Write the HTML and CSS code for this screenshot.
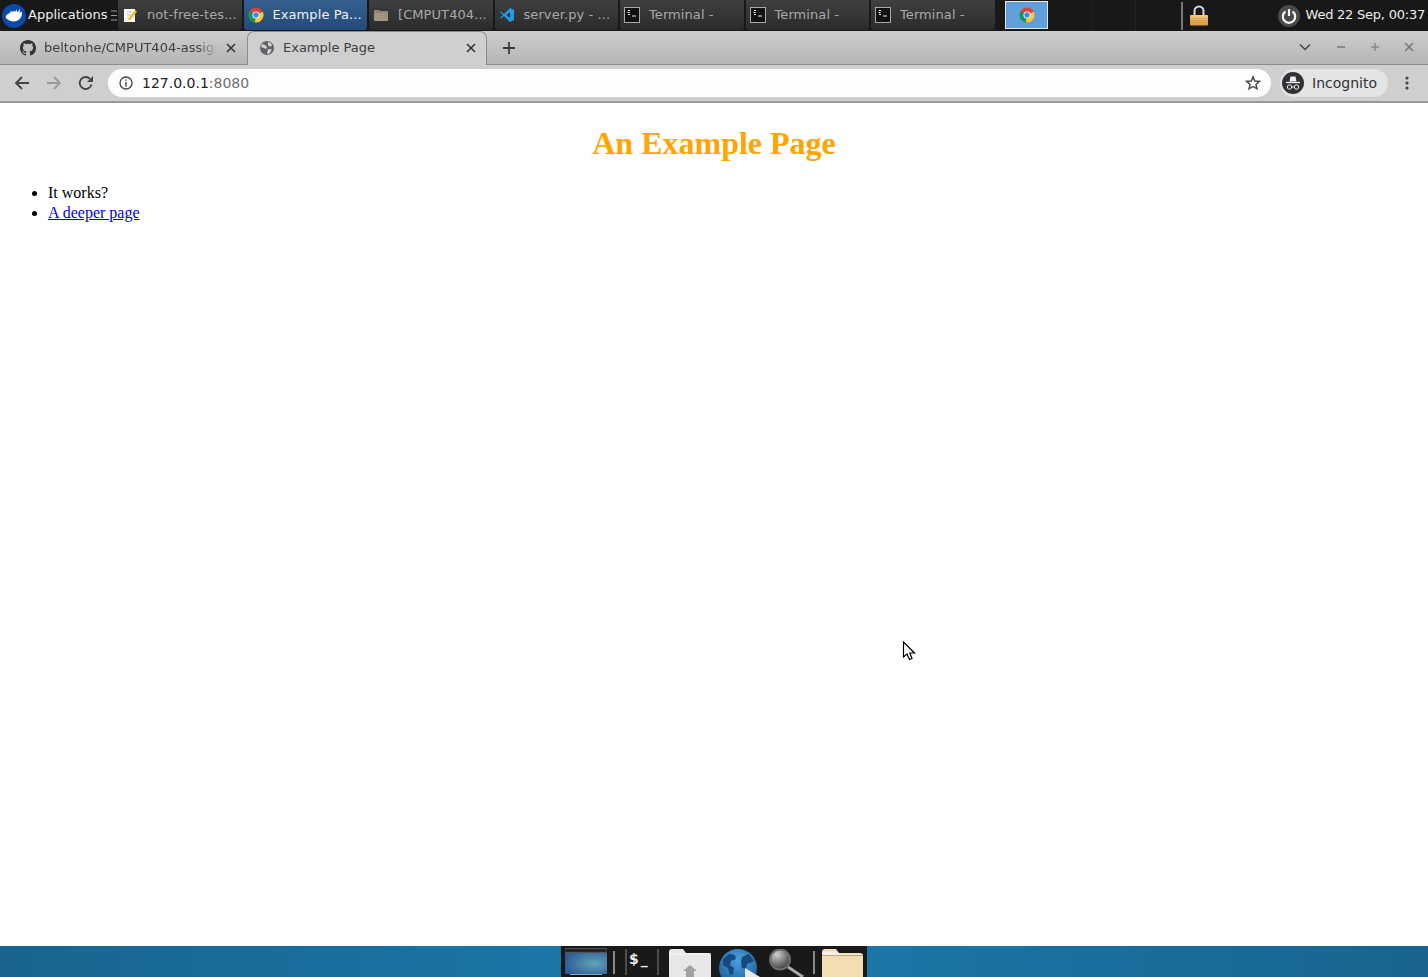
FILE: index.html
```html
<!DOCTYPE html>
<html lang="en">
<head>
<meta charset="utf-8">
<title>Example Page</title>
<link rel="stylesheet" href="styles.css">
</head>
<body>
<div class="screen">
  <header class="panel">
    <div class="apps">
      <svg class="xfce" width="24" height="24" viewBox="0 0 24 24"><circle cx="12" cy="12" r="12" fill="#0b4aa8"/><path d="M3.500 13.500C4 11 6 9.500 8 9l1-2.500 1.300 1.800 2-1.800.6 1.500 2-2.500.3 3 3-3.500-.7 3.800 2.500-1c.5 4-2 9-6.500 9.500-3.500.4-7.500-.5-10-3.800z" fill="#fff"/></svg>
      <span class="apps-label">Applications</span>
      <svg class="apps-more" width="6" height="11" viewBox="0 0 6 11"><path d="M0 1h6M0 5.500h6M0 10h6" stroke="#9a9a9a"/></svg>
    </div>
    <div class="tasks">
      <div class="task">
        <svg class="task-icon" width="16" height="16" viewBox="0 0 16 16"><rect x="2" y="2" width="11" height="13" fill="#fbfbf3"/><path d="M5 5h5M5 8h4M5 11h2" stroke="#bbb"/><path d="M7 11l6-8 2 1.500-6 8-3 1z" fill="#f2c01f"/></svg>
        <span class="task-label">not-free-tes...</span>
      </div>
      <div class="task active">
        <svg class="task-icon" width="16" height="16" viewBox="0 0 16 16"><use href="#chrome"/></svg>
        <span class="task-label">Example Pa...</span>
      </div>
      <div class="task">
        <svg class="task-icon" width="16" height="16" viewBox="0 0 16 16"><path d="M1 3h5l1 1h8v10H1z" fill="#8f8270"/><path d="M1 6h14v8H1z" fill="#a2957f"/></svg>
        <span class="task-label">[CMPUT404...</span>
      </div>
      <div class="task">
        <svg class="task-icon" width="16" height="16" viewBox="0 0 16 16"><path d="M11 1l4 2v10l-4 2-6-6-3 2.500L1 11l3-3-3-3 1-.5L5 7z" fill="#1f9be8"/><path d="M11 5L7.500 8l3.500 3z" fill="#2d2d2d"/></svg>
        <span class="task-label">server.py - ...</span>
      </div>
      <div class="task">
        <svg class="task-icon" width="16" height="16" viewBox="0 0 16 16"><use href="#term"/></svg>
        <span class="task-label">Terminal -</span>
      </div>
      <div class="task">
        <svg class="task-icon" width="16" height="16" viewBox="0 0 16 16"><use href="#term"/></svg>
        <span class="task-label">Terminal -</span>
      </div>
      <div class="task">
        <svg class="task-icon" width="16" height="16" viewBox="0 0 16 16"><use href="#term"/></svg>
        <span class="task-label">Terminal -</span>
      </div>
    </div>
    <div class="pager">
      <div class="pager-cell current"><svg width="16" height="16" viewBox="0 0 16 16"><use href="#chrome"/></svg></div>
      <div class="pager-cell"></div>
      <div class="pager-cell"></div>
      <div class="pager-cell narrow"></div>
    </div>
    <div class="lock-sep"></div>
    <svg class="lock" width="18" height="21" viewBox="0 0 18 21"><defs><linearGradient id="brass" x1="0" y1="0" x2="0" y2="1"><stop offset="0" stop-color="#f3cc85"/><stop offset="1" stop-color="#d89a3e"/></linearGradient></defs><path d="M4.500 11V6a4.500 4.500 0 0 1 9 0v5" fill="none" stroke="#d8d8d8" stroke-width="2"/><rect y="10" width="18" height="10.500" rx="1" fill="url(#brass)"/><path d="M0 13.500h18M0 15.500h18M0 17.500h18" stroke="#c98f3c" stroke-width=".5"/></svg>
    <div class="clock-group">
      <svg class="power" width="22" height="22" viewBox="0 0 22 22"><circle cx="11" cy="11" r="11" fill="#4a4a4a"/><path d="M7.500 6.500a6.200 6.200 0 1 0 7 0" fill="none" stroke="#f4f4f4" stroke-width="2.200"/><path d="M11 4v7" stroke="#f4f4f4" stroke-width="2.200"/></svg>
      <span class="clock">Wed 22 Sep, 00:37</span>
    </div>
  </header>

  <div class="tabstrip">
    <div class="tab">
      <svg class="tab-icon" width="16" height="16" viewBox="0 0 16 16"><path fill="#333" d="M8 0C3.580 0 0 3.580 0 8c0 3.540 2.290 6.530 5.470 7.590.4.070.55-.17.55-.38 0-.19-.01-.82-.01-1.490-2.010.37-2.530-.49-2.690-.94-.09-.23-.48-.94-.82-1.130-.28-.15-.68-.52-.01-.53.630-.01 1.080.58 1.230.82.720 1.210 1.870.87 2.330.66.070-.52.280-.87.510-1.070-1.780-.2-3.640-.89-3.640-3.950 0-.87.310-1.590.82-2.150-.08-.2-.36-1.020.08-2.120 0 0 .67-.21 2.200.82.640-.18 1.320-.27 2-.27s1.360.09 2 .27c1.530-1.040 2.200-.82 2.200-.82.440 1.100.16 1.920.08 2.120.51.560.82 1.270.82 2.150 0 3.070-1.870 3.750-3.650 3.950.29.250.54.730.54 1.480 0 1.070-.01 1.930-.01 2.200 0 .21.150.46.550.38A8.010 8.010 0 0 0 16 8c0-4.420-3.580-8-8-8z"/></svg>
      <span class="tab-title fade">beltonhe/CMPUT404-assignment</span>
      <svg class="tab-close" width="10" height="10" viewBox="0 0 10 10"><path d="M1 1l8 8M9 1l-8 8" stroke="#333" stroke-width="1.600"/></svg>
    </div>
    <div class="tab current">
      <svg class="tab-icon" width="16" height="16" viewBox="0 0 16 16"><circle cx="8" cy="8" r="7" fill="#5f6368"/><path d="M3 4l3 1 2 2-1 2-2-1-3-1zM9 2l3 1 1 3-3 .5-1-2zM9 9l4 .5-2.500 4L8 14z" fill="#d3d3d3"/></svg>
      <span class="tab-title">Example Page</span>
      <svg class="tab-close" width="10" height="10" viewBox="0 0 10 10"><path d="M1 1l8 8M9 1l-8 8" stroke="#333" stroke-width="1.600"/></svg>
    </div>
    <svg class="newtab" width="14" height="14" viewBox="0 0 14 14"><path d="M7 1v12M1 7h12" stroke="#3c3c3c" stroke-width="1.800"/></svg>
    <div class="win-controls">
      <svg width="12" height="8" viewBox="0 0 12 8"><path d="M1 1.500l5 5 5-5" fill="none" stroke="#444" stroke-width="1.500"/></svg>
      <span class="win-min"></span>
      <svg class="win-max" width="10" height="10" viewBox="0 0 10 10"><path d="M5 1v8M1 5h8" stroke="#8a8a8a" stroke-width="1.500"/></svg>
      <svg class="win-close" width="10" height="10" viewBox="0 0 10 10"><path d="M1 1l8 8M9 1l-8 8" stroke="#777" stroke-width="1.500"/></svg>
    </div>
  </div>

  <div class="toolbar">
    <svg class="nav back" width="16" height="16" viewBox="0 0 16 16"><path d="M15 8H2M8 2L2 8l6 6" fill="none" stroke="#444" stroke-width="1.800"/></svg>
    <svg class="nav forward" width="16" height="16" viewBox="0 0 16 16"><path d="M1 8h13M8 2l6 6-6 6" fill="none" stroke="#999" stroke-width="1.800"/></svg>
    <svg class="nav reload" width="16" height="16" viewBox="0 0 16 16"><path d="M13.500 9.500A6 6 0 1 1 12 3.800" fill="none" stroke="#444" stroke-width="1.800"/><path d="M15 1v6H9z" fill="#444"/></svg>
    <div class="omnibox">
      <svg class="info" width="14" height="14" viewBox="0 0 14 14"><circle cx="7" cy="7" r="6" fill="none" stroke="#444" stroke-width="1.300"/><path d="M7 6v4.500M7 3.500v1.300" stroke="#444" stroke-width="1.400"/></svg>
      <span class="url">127.0.0.1<span class="port">:8080</span></span>
      <svg class="star" width="16" height="16" viewBox="0 0 16 16"><path d="M8 1.800l1.800 4.200 4.600.4-3.500 3 1.100 4.500L8 11.500l-4 2.400 1.100-4.500-3.500-3 4.600-.4z" fill="none" stroke="#444" stroke-width="1.400"/></svg>
    </div>
    <div class="profile">
      <svg width="22" height="22" viewBox="0 0 22 22"><circle cx="11" cy="11" r="11" fill="#303236"/><path d="M7.500 9.500l1-5h5l1 5z" fill="#eee"/><path d="M4 10.500h14" stroke="#eee" stroke-width="1.300"/><circle cx="7.500" cy="15" r="2.200" fill="none" stroke="#eee"/><circle cx="14.500" cy="15" r="2.200" fill="none" stroke="#eee"/><path d="M9.700 15h2.600" stroke="#eee"/></svg>
      <span class="profile-label">Incognito</span>
    </div>
    <svg class="menu" width="4" height="14" viewBox="0 0 4 14"><circle cx="2" cy="2" r="1.600" fill="#444"/><circle cx="2" cy="7" r="1.600" fill="#444"/><circle cx="2" cy="12" r="1.600" fill="#444"/></svg>
  </div>

  <main class="page">
    <h1 class="title">An Example Page</h1>
    <ul class="list">
      <li>It works?</li>
      <li><a href="#deeper">A deeper page</a></li>
    </ul>
    <svg class="cursor" width="14" height="20" viewBox="0 0 14 20"><path d="M1.500 1v15l3.500-3 2.500 5.500 2.500-1L7.800 12H12.500z" fill="#fff" stroke="#000" stroke-width="1.200"/></svg>
  </main>

  <footer class="desktop">
    <div class="dock">
      <svg class="dock-icon screen-icon" width="42" height="29" viewBox="0 0 42 29"><defs><radialGradient id="sky" cx=".7" cy=".5" r=".75"><stop offset="0" stop-color="#5fa3b5"/><stop offset="1" stop-color="#2d5a94"/></radialGradient></defs><rect y=".5" width="42" height="4" fill="#222" stroke="#555"/><rect y="5" width="42" height="21" fill="url(#sky)"/><rect x="5" y="26" width="32" height="3" fill="#111"/><path d="M5 26.500h32" stroke="#7eaccb"/></svg>
      <span class="dock-sep"></span>
      <div class="dock-term">$<span class="dock-prompt">_</span></div>
      <svg class="dock-icon home-folder" width="42" height="28" viewBox="0 0 42 28"><path d="M0 28V3q0-3 3-3h11l3 4h22q3 0 3 3v21z" fill="#e8e8e8"/><path d="M0 5h42" stroke="#fafafa"/><path d="M14 22l7-6 7 6h-3v6h-8v-6z" fill="#a2a2a2"/></svg>
      <svg class="dock-icon globe" width="42" height="28" viewBox="0 0 42 28"><defs><radialGradient id="sea" cx=".5" cy=".3" r=".7"><stop offset="0" stop-color="#4ba0dc"/><stop offset="1" stop-color="#1c5c9c"/></radialGradient></defs><circle cx="20" cy="19" r="19" fill="url(#sea)"/><path d="M5 10l6-5 6 1 1 4-5 2-1 4 4 3-1 6-3 1-2-7-5-3zM24 8l7-3 5 7-7 3-1 5-4-1-1-6z" fill="#174b80"/><path d="M27 19l15 9H27z" fill="#e8e8e8"/></svg>
      <svg class="dock-icon lens" width="36" height="28" viewBox="0 0 36 28"><defs><radialGradient id="glass" cx=".35" cy=".25" r=".8"><stop offset="0" stop-color="#d0d0d0"/><stop offset="1" stop-color="#3a3a3a"/></radialGradient></defs><circle cx="12" cy="10.500" r="10" fill="url(#glass)" stroke="#6c6c6c" stroke-width="2"/><path d="M20 18l15 10" stroke="#a8a8a8" stroke-width="3"/></svg>
      <span class="dock-sep second"></span>
      <svg class="dock-icon plain-folder" width="41" height="28" viewBox="0 0 41 28"><path d="M0 28V3q0-3 3-3h11l3 4h21q3 0 3 3v21z" fill="#f5ddb2"/><path d="M0 2.500h15l3 3h23V6H0z" fill="#f7f3ea"/><path d="M0 6.500h41" stroke="#bda57c"/></svg>
    </div>
  </footer>
</div>
<svg class="defs" width="0" height="0">
  <symbol id="chrome" viewBox="0 0 16 16"><circle cx="8" cy="8" r="7.500" fill="#db4437"/><path d="M8 8L1.500 4.200A7.500 7.500 0 0 0 7 15.400z" fill="#0f9d58"/><path d="M8 8l6.800-3.200A7.500 7.500 0 0 1 7 15.400z" fill="#fcc934"/><circle cx="8" cy="8" r="3.500" fill="#fff"/><circle cx="8" cy="8" r="2.700" fill="#4285f4"/></symbol>
  <symbol id="term" viewBox="0 0 16 16"><rect x=".5" y=".5" width="15" height="15" fill="#111" stroke="#aaa"/><path d="M4 3.500h2M3.500 5.500h2M4 7.500h2M8 9h4" stroke="#eee"/></symbol>
</svg>
</body>
</html>
```

FILE: styles.css
```css
* { box-sizing: border-box; }
html, body { margin: 0; padding: 0; }
body { font-family: "DejaVu Sans", sans-serif; overflow: hidden; }
.defs { position: absolute; }
.screen { width: 1428px; height: 977px; display: flex; flex-direction: column; }

/* desktop panel */
.panel { height: 31px; background: #181818; display: flex; align-items: center; color: #eee; font-size: 13px; flex: none; }
.apps { width: 118px; height: 31px; display: flex; align-items: center; padding-left: 2px; flex: none; }
.xfce { flex: none; margin-top: 1px; }
.apps-label { margin: 0 0 2px 2px; color: #f0f0f0; white-space: nowrap; }
.apps-more { margin-left: 4px; flex: none; }
.tasks { display: flex; gap: 2px; height: 31px; flex: none; }
.task { width: 123.5px; height: 30px; padding-left: 4px; display: flex; align-items: center; border-radius: 0 0 3px 3px; background: linear-gradient(#3f3f3f, #2b2b2b); color: #a9a9a9; white-space: nowrap; overflow: hidden; }
.task.active { background: linear-gradient(#35608f, #234a78); color: #f0f0f0; }
.task-icon { flex: none; }
.task-label { margin: 0 0 2px 9px; letter-spacing: 0.08px; }
.pager { display: flex; margin-left: 10.500px; height: 31px; flex: none; }
.pager-cell { width: 44px; height: 31px; border-right: 1px solid #222; display: flex; align-items: center; justify-content: center; }
.pager-cell.current { width: 43px; height: 28px; margin: 1px 0 2px; border: 1px solid #e8e8e8; background: #5f9fdc; }
.pager-cell.narrow { width: 43px; border-right: none; }
.lock-sep { width: 2px; height: 28px; background: #777; margin-left: 2px; flex: none; }
.lock { margin-left: 7px; flex: none; }
.clock-group { margin-left: auto; display: flex; align-items: center; flex: none; padding-right: 3px; }
.clock { margin: 0 0 2px 6px; color: #eee; white-space: nowrap; letter-spacing: -0.23px; }

/* tab strip */
.tabstrip { height: 34px; flex: none; display: flex; align-items: flex-end; background: linear-gradient(#cecece, #b4b4b4); border-bottom: 1px solid #8b8b8b; padding-left: 7px; position: relative; }
.tab { width: 240px; height: 33px; display: flex; align-items: center; padding: 0 11px 0 13px; color: #3c4043; font-size: 13px; flex: none; }
.tab.current { background: #cfcfcf; border: 1px solid #8b8b8b; border-bottom: none; border-radius: 7px 7px 0 0; height: 34px; margin-bottom: -1px; padding: 0 10px 2px 11px; }
.tab-icon { flex: none; }
.tab-title { margin-left: 8px; flex: 1; min-width: 0; white-space: nowrap; overflow: hidden; }
.tab-title.fade { -webkit-mask-image: linear-gradient(90deg, #000 88%, transparent); mask-image: linear-gradient(90deg, #000 88%, transparent); }
.tab-close { margin-left: 8px; flex: none; }
.newtab { margin: 0 0 9px 15px; flex: none; }
.win-controls { margin-left: auto; display: flex; align-items: center; height: 34px; flex: none; padding-right: 14px; }
.win-min { width: 8px; height: 2px; background: #8a8a8a; margin-left: 26px; }
.win-max { margin-left: 25px; }
.win-close { margin-left: 24px; }

/* toolbar */
.toolbar { height: 38px; flex: none; background: #cfcfcf; border-bottom: 2px solid #9a9a9a; display: flex; align-items: center; padding: 0 19px 0 14px; }
.nav { flex: none; }
.forward { margin-left: 16px; }
.reload { margin-left: 16px; }
.omnibox { margin-left: 14px; flex: 1; height: 28px; background: #fdfdfd; border-radius: 14px; display: flex; align-items: center; padding: 0 10px 0 11px; font-size: 14px; color: #202124; }
.url { margin-left: 9px; }
.port { color: #6f6f6f; }
.star { margin-left: auto; }
.profile { margin-left: 9px; height: 28px; width: 108px; background: #e4e4e4; border-radius: 14px; display: flex; align-items: center; padding-left: 2px; font-size: 14px; color: #303236; flex: none; }
.profile-label { margin-left: 8px; }
.menu { margin-left: 17px; flex: none; }

/* page */
.page { flex: 1; background: #fff; font-family: "Liberation Serif", serif; font-size: 16px; color: #000; padding: 8px; position: relative; }
.title { margin: 14px 0 0; font-size: 32px; font-weight: bold; color: orange; text-align: center; line-height: 37px; }
.list { margin: 21px 0 0; padding-left: 40px; }
.list li { line-height: 20px; }
.list a { color: #0000ee; }
.cursor { position: absolute; left: 902px; top: 538px; }

/* dock */
.desktop { height: 31px; flex: none; background: linear-gradient(90deg, #18648f, #1c7aad 50%, #18648f); display: flex; justify-content: center; overflow: hidden; }
.dock { width: 306px; height: 31px; background: #191919; display: flex; align-items: flex-end; padding-left: 4px; }
.dock-icon { flex: none; }
.dock-sep { width: 2px; height: 23px; background: #888; margin: 0 10px 3px 6px; flex: none; }
.dock-sep.second { margin: 0 7px 3px 9px; }
.dock-term { width: 34px; height: 26px; margin-bottom: 2px; border-left: 2px solid #4d4d4d; border-right: 2px solid #4d4d4d; color: #eee; font-size: 14px; font-weight: bold; padding-left: 2px; line-height: 20px; flex: none; }
.dock-prompt { margin-left: 2px; }
.home-folder { margin-left: 10px; }
.globe { margin-left: 7px; }
.lens { margin-left: 8px; }
```
